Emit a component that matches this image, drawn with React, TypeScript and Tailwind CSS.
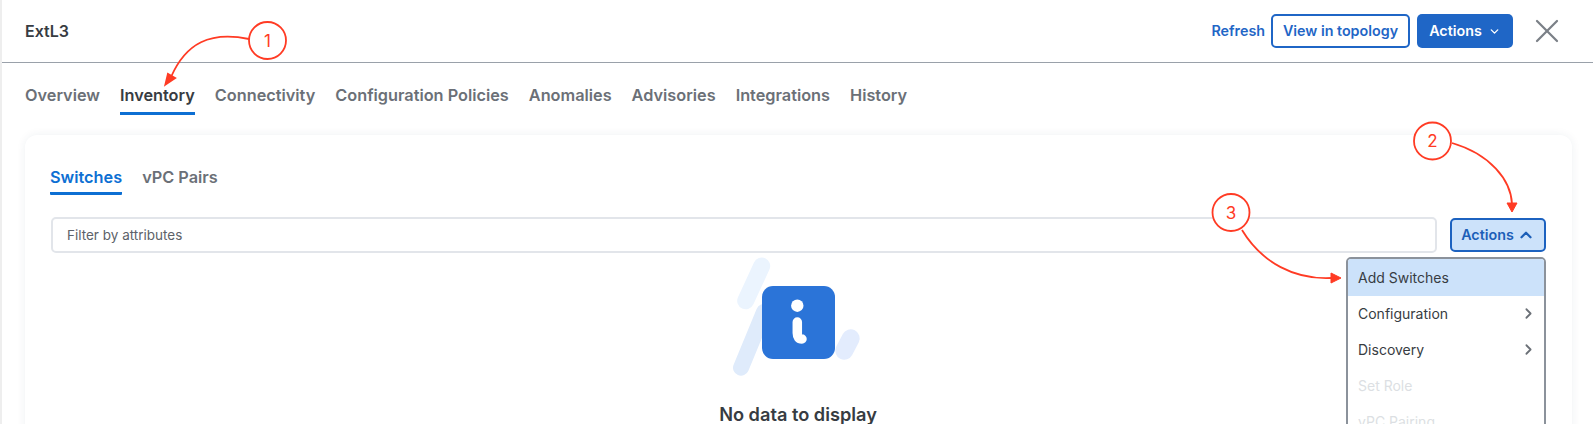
import React from 'react';
import { ChevronDown, ChevronRight, ChevronUp, X } from 'lucide-react';

const tabs = ['Overview', 'Inventory', 'Connectivity', 'Configuration Policies', 'Anomalies', 'Advisories', 'Integrations', 'History'];
const RED = '#ff3b24';

const Callout: React.FC<{ cx: number; cy: number; n: string }> = ({ cx, cy, n }) => (
  <g>
    <circle cx={cx} cy={cy} r="18.5" fill="#fff" stroke={RED} strokeWidth="1.8" />
    <text x={cx} y={cy + 6} textAnchor="middle" fontSize="17" fontFamily="Inter, sans-serif" fill={RED}>{n}</text>
  </g>
);

const Annotations: React.FC = () => (
  <svg className="absolute left-[-2px] top-0 pointer-events-none" width="1593" height="424">
    <path d="M249 39 C210 31 186 43 171 77" fill="none" stroke={RED} strokeWidth="1.8" />
    <path d="M165.5 84.5 L175 78 L168 74 Z" fill={RED} stroke={RED} strokeWidth="2" />
    <Callout cx={267.5} cy={40.5} n="1" />
    <path d="M1452 143 C1490 154 1511 180 1512 204" fill="none" stroke={RED} strokeWidth="1.8" />
    <path d="M1512 212 L1507 203 L1517 203 Z" fill={RED} stroke={RED} strokeWidth="1" />
    <Callout cx={1432.5} cy={141} n="2" />
    <path d="M1242 230 C1262 263 1295 280 1332 278" fill="none" stroke={RED} strokeWidth="1.8" />
    <path d="M1341 278 L1331 273 L1331 283 Z" fill={RED} stroke={RED} strokeWidth="1" />
    <Callout cx={1231} cy={212.5} n="3" />
  </svg>
);

const EmptyArt: React.FC = () => (
  <svg width="158" height="122" viewBox="0 0 158 122" className="block">
    <line x1="42.7" y1="9" x2="26.7" y2="43.7" stroke="#ebf4fe" strokeWidth="17" strokeLinecap="round" />
    <line x1="45" y1="55" x2="22" y2="110.7" stroke="#dfebfb" strokeWidth="16" strokeLinecap="round" />
    <line x1="131.7" y1="81.3" x2="125.3" y2="93.7" stroke="#e3ecfd" strokeWidth="18" strokeLinecap="round" />
    <rect x="43" y="29" width="73" height="73" rx="11" fill="#2b74d8" />
    <circle cx="78.3" cy="48.7" r="6.2" fill="#fff" />
    <path d="M78.3 65 L78.3 76 Q78.3 82 83 82" fill="none" stroke="#fff" strokeWidth="9.5" strokeLinecap="round" />
  </svg>
);

export default function App() {
  return (
    <div className="relative w-[1593px] h-[424px] overflow-hidden bg-white border-l-2 border-[#eeeeee] font-['Inter',sans-serif]">
      <header className="h-[63px] flex items-center border-b border-[#9aa1aa] pl-[23px] pr-[26px]">
        <h1 className="text-[16px] font-semibold text-[#373c42] -mt-[1px]">ExtL3</h1>
        <div className="ml-auto flex items-center">
          <button className="text-[14.3px] font-semibold text-[#1f66c6] mr-[6px]">Refresh</button>
          <button className="h-[34px] w-[139px] rounded-[5px] border-2 border-[#1f66c6] text-[14.3px] font-semibold text-[#1f66c6] mr-[7px]">View in topology</button>
          <button className="h-[34px] w-[96px] rounded-[5px] bg-[#1f66c6] text-[14.3px] font-semibold text-white flex items-center justify-center gap-[6px] mr-[14px]">
            Actions <ChevronDown size={13} strokeWidth={2.5} />
          </button>
          <X size={40} strokeWidth={1.35} className="text-[#7b8087]" />
        </div>
      </header>

      <nav className="flex gap-[20px] pl-[23px] h-[52px] pt-[22px]">
        {tabs.map(t => (
          <div key={t} className={`h-[30px] text-[16.3px] leading-[20px] font-semibold ${t === 'Inventory' ? 'text-[#373c42] border-b-[3px] border-[#0d6fd3]' : 'text-[#6b7077]'}`}>{t}</div>
        ))}
      </nav>

      <section className="mt-[20px] ml-[23px] w-[1547px] h-[400px] rounded-t-[12px] bg-white shadow-[0_0_10px_rgba(30,50,80,0.07)] pl-[25px] pr-[26px] pt-[32px]">
        <div className="flex gap-[20px] h-[28px]">
          <div className="h-[28px] text-[16.3px] leading-[20px] font-semibold text-[#0d6fd3] border-b-[3px] border-[#0d6fd3] rounded-b-[1px]">Switches</div>
          <div className="text-[16.3px] leading-[20px] font-semibold text-[#6b7077]">vPC Pairs</div>
        </div>
        <div className="relative flex items-start mt-[22px] pl-[1px] gap-[13px]">
          <div className="h-[36px] flex-1 rounded-[5px] border-2 border-[#e2e5ea] pl-[14px] flex items-center text-[13.5px] text-[#5d6269]">Filter by attributes</div>
          <button className="mt-[1px] h-[34px] w-[96px] rounded-[5px] border-2 border-[#1c62c0] bg-[#cce2fa] text-[14.3px] font-semibold text-[#1c5fb8] flex items-center justify-center gap-[3px]">
            Actions <ChevronUp size={18} strokeWidth={3} />
          </button>
          <div className="absolute right-0 top-[40px] w-[200px] h-[200px] rounded-[5px] border-2 border-[#8b929b] bg-white text-[14px] text-[#373c42] z-10">
            <div className="h-[37px] bg-[#cce2fa] pl-[10px] flex items-center rounded-t-[3px]">Add Switches</div>
            <div className="h-[35px] pl-[10px] pr-[7px] flex items-center justify-between">Configuration <ChevronRight size={17} strokeWidth={2.5} className="text-[#6b7077]" /></div>
            <div className="h-[36px] pl-[10px] pr-[7px] flex items-center justify-between">Discovery <ChevronRight size={17} strokeWidth={2.5} className="text-[#6b7077]" /></div>
            <div className="h-[36px] pl-[10px] flex items-center text-[#dcdfe3]">Set Role</div>
            <div className="h-[36px] pl-[10px] flex items-center text-[#dcdfe3]">vPC Pairing</div>
          </div>
        </div>
        <div className="flex flex-col items-center mt-[4px]">
          <EmptyArt />
          <p className="mt-[22px] text-[18.2px] font-semibold text-[#373c42]">No data to display</p>
        </div>
      </section>
      <Annotations />
    </div>
  );
}
